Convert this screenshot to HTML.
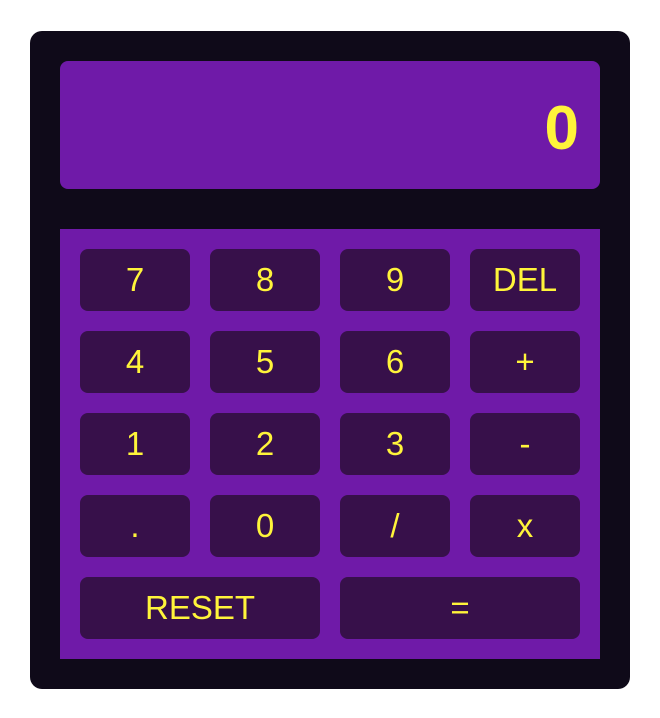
<!DOCTYPE html>
<html><head><style>
html,body{margin:0;padding:0;background:#fff;width:660px;height:718px;overflow:hidden}
body{font-family:"Liberation Sans",Arial,sans-serif}
.calc{position:absolute;left:30px;top:31px;width:600px;height:658px;background:#0f0a19;border-radius:12px}
.disp{position:absolute;left:30px;top:30px;width:540px;height:128px;background:#6f1aa8;border-radius:8px;color:#fff43a;font-weight:bold;font-size:62px}
.disp span{position:absolute;right:21px;top:37px;line-height:62px}
.pad{position:absolute;left:30px;top:198px;width:540px;height:430px;background:#6f1aa8}
.b{position:absolute;width:110px;height:62px;background:#37104a;border-radius:8px;color:#fff43a;font-size:33px;line-height:61px;text-align:center}
.w{width:240px}
</style></head><body>
<div class="calc">
<div class="disp"><span>0</span></div>
<div class="pad">
<div class="b" style="left:20px;top:20px">7</div>
<div class="b" style="left:150px;top:20px">8</div>
<div class="b" style="left:280px;top:20px">9</div>
<div class="b" style="left:410px;top:20px">DEL</div>
<div class="b" style="left:20px;top:102px">4</div>
<div class="b" style="left:150px;top:102px">5</div>
<div class="b" style="left:280px;top:102px">6</div>
<div class="b" style="left:410px;top:102px">+</div>
<div class="b" style="left:20px;top:184px">1</div>
<div class="b" style="left:150px;top:184px">2</div>
<div class="b" style="left:280px;top:184px">3</div>
<div class="b" style="left:410px;top:184px">-</div>
<div class="b" style="left:20px;top:266px">.</div>
<div class="b" style="left:150px;top:266px">0</div>
<div class="b" style="left:280px;top:266px">/</div>
<div class="b" style="left:410px;top:266px">x</div>
<div class="b w" style="left:20px;top:348px">RESET</div>
<div class="b w" style="left:280px;top:348px">=</div>
</div>
</div>
</body></html>
